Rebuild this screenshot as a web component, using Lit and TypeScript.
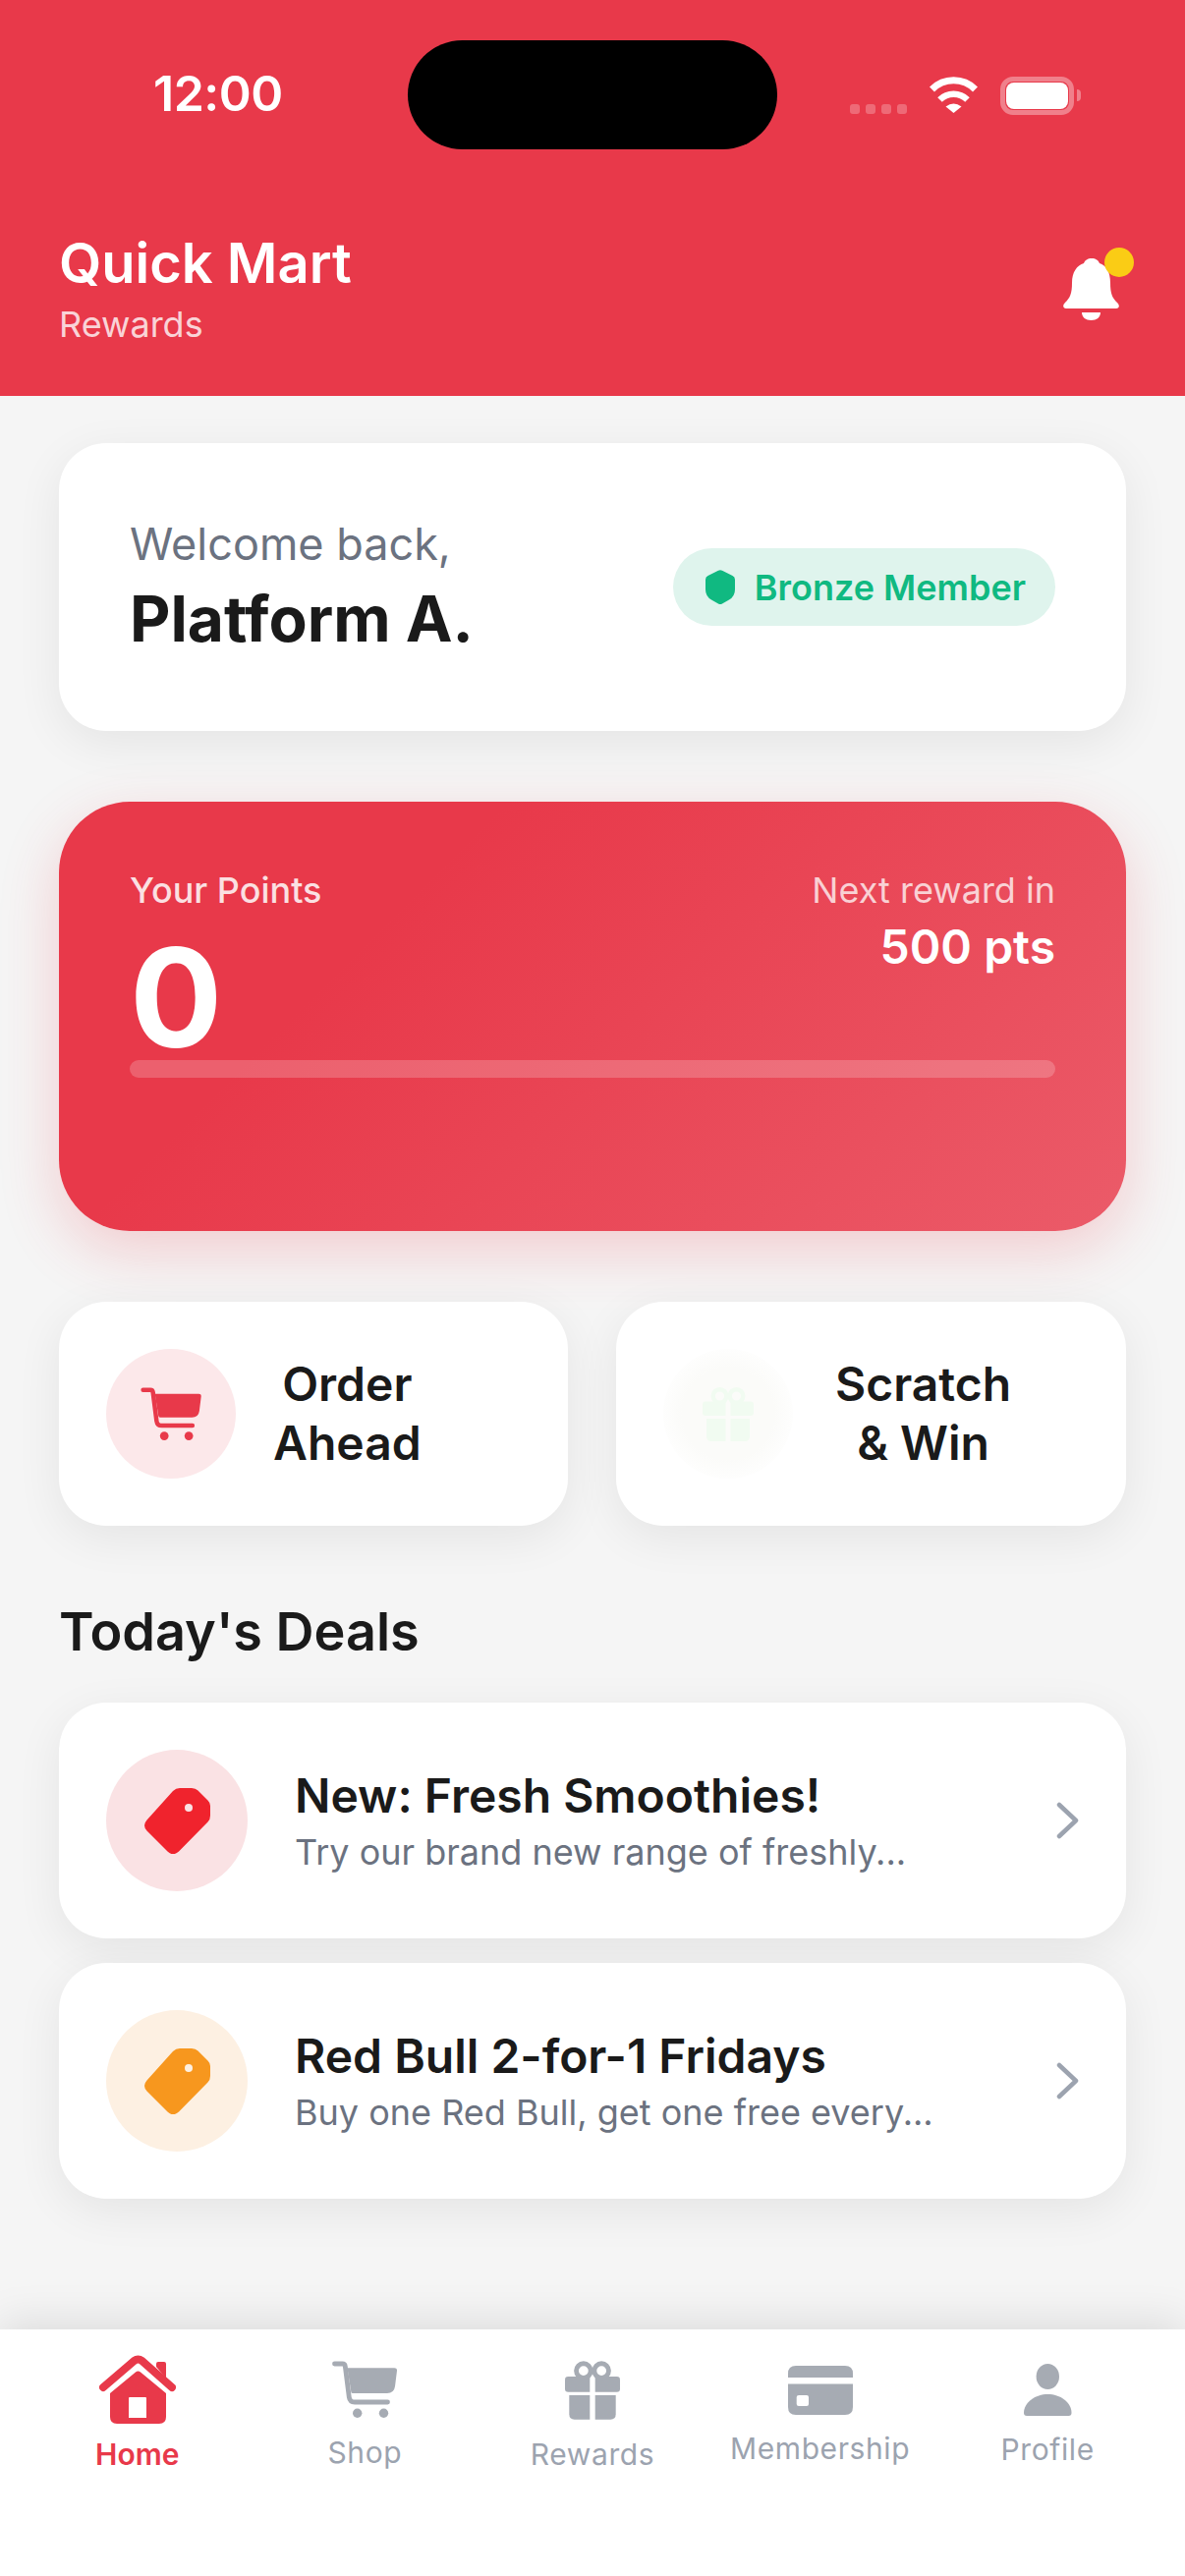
import { LitElement, html, css, svg } from "lit";
import { customElement } from "lit/decorators.js";

const cart = (c: string, w: number, h: number) => html`<svg width=${w} height=${h} viewBox="0 0 66 58" fill=${c}>
  <path d="M2.5 3H10.500Q13 3 13.300 5.500L17.300 37Q18 42 23 42H56.500" fill="none" stroke=${c} stroke-width="4.800" stroke-linecap="round" stroke-linejoin="round"/>
  <path d="M15.500 7.300H63.500Q66.300 7.300 66 10L64 26Q63 33 56 33H21Q19.500 33 19.300 31.500Z"/>
  <circle cx="25.700" cy="53.300" r="4.700"/><circle cx="52.500" cy="53.300" r="4.700"/></svg>`;

const gift = (c: string, w: number, h: number) => html`<svg width=${w} height=${h} viewBox="0 0 52 56" fill=${c}>
  <circle cx="17.500" cy="10" r="6.800" fill="none" stroke=${c} stroke-width="4.500"/>
  <circle cx="34.500" cy="10" r="6.800" fill="none" stroke=${c} stroke-width="4.500"/>
  <path d="M3 15.500H23.500V30H3Q0 30 0 27V18.500Q0 15.500 3 15.500Z"/>
  <path d="M28.500 15.500H49Q52 15.500 52 18.500V27Q52 30 49 30H28.500Z"/>
  <path d="M4 33H23.500V56H9Q4 56 4 51Z"/>
  <path d="M28.500 33H48V51Q48 56 43 56H28.500Z"/></svg>`;

const tag = (c: string, hole: string) => html`<svg width="67" height="67" viewBox="0 0 67 67">
  <path fill=${c} d="M36 0H48Q52 0 54.500 2.500L64.500 12.500Q67 15 67 18V28Q67 32 64.500 34.500L35 64.500Q29 70 23.500 64.500L2.500 43.500Q-2.500 38 2.500 32.500L29 3Q32 0 36 0Z"/>
  <circle cx="45" cy="20" r="4" fill=${hole}/></svg>`;

const chevron = html`<svg class="chev" width="26" height="38" viewBox="0 0 26 38" fill="none" stroke="#9ca3af" stroke-width="4.500" stroke-linecap="round" stroke-linejoin="round"><path d="M4 3L21 19L4 35"/></svg>`;

const wifi = svg`<path d="M3.500 13A31 31 0 0 1 47.500 13" fill="none" stroke="#fff" stroke-width="7"/>
  <path d="M11.500 23.500A20 20 0 0 1 39.500 23.500" fill="none" stroke="#fff" stroke-width="6.500"/>
  <path d="M17.500 30.500Q25.500 24.500 33.500 30.500L25.500 37Z" fill="#fff"/>`;

@customElement("app-root")
export class AppRoot extends LitElement {
  static styles = css`
    :host { display: flex; flex-direction: column; width: 1206px; height: 2622px; overflow: hidden; background: #f5f5f5; font-family: Inter, "Liberation Sans", sans-serif; color: #1a1a1a; }
    .head { background: #e8394a; height: 403px; padding-top: 41px; box-sizing: border-box; color: #fff; flex: none; }
    .status { display: flex; height: 111px; }
    .time { width: 259px; margin-left: 156px; font-size: 50px; font-weight: 600; line-height: 111px; margin-top: -1px; letter-spacing: -0.5px; }
    .island { width: 376px; height: 111px; border-radius: 56px; background: #000; flex: none; }
    .sicons { display: flex; align-items: flex-start; margin-left: 74px; padding-top: 37px; }
    .dots { display: flex; gap: 6px; margin-top: 28px; margin-right: 22px; }
    .dots i { width: 10px; height: 10px; border-radius: 3px; background: rgba(255,255,255,.25); }
    .batt { margin-left: 22px; width: 75px; height: 39px; box-sizing: border-box; border: 5px solid rgba(255,255,255,.36); border-radius: 13px; padding: 1px; }
    .batt b { display: block; height: 100%; background: #fff; border-radius: 8px; }
    .nub { width: 4px; height: 12px; margin: 13px 0 0 3px; background: rgba(255,255,255,.36); border-radius: 0 6px 6px 0; }
    .hrow { display: flex; justify-content: space-between; padding: 82px 0 0 60px; }
    .brand { font-size: 56px; font-weight: 600; line-height: 68px; }
    .sub { font-size: 36px; line-height: 44px; color: rgba(255,255,255,.8); margin-top: 6px; }
    .bell { position: relative; margin: 29px 67px 0 0; width: 57px; height: 63px; }
    .bell i { position: absolute; left: 42px; top: -11px; width: 30px; height: 30px; border-radius: 50%; background: #facc15; }
    main { flex: 1; padding: 48px 60px 0; display: flex; flex-direction: column; min-height: 0; }
    .card { background: #fff; border-radius: 48px; box-shadow: 0 12px 48px rgba(0,0,0,.07); }
    .welcome { height: 293px; box-sizing: border-box; padding: 0 72px; display: flex; align-items: center; justify-content: space-between; }
    .hello { font-size: 45px; color: #6b7280; line-height: 56px; }
    .name { font-size: 64px; font-weight: 700; line-height: 80px; margin-top: 8px; }
    .badge { display: flex; align-items: center; gap: 20px; height: 79px; padding: 0 30px 0 33px; border-radius: 40px; background: #dff4ed; color: #10b981; font-size: 36px; font-weight: 600; }
    .points { margin-top: 72px; height: 437px; box-sizing: border-box; border-radius: 72px; padding: 68px 72px 0; color: #fff; background: linear-gradient(135deg, #e8394a 30%, #eb5b69 100%); box-shadow: 0 20px 60px rgba(232,57,74,.22); }
    .prow { display: flex; justify-content: space-between; }
    .plabel { font-size: 36px; font-weight: 500; line-height: 44px; color: rgba(255,255,255,.85); }
    .nlabel { font-size: 36px; line-height: 44px; text-align: right; color: rgba(255,255,255,.75); }
    .npts { font-size: 48px; font-weight: 600; line-height: 60px; text-align: right; margin-top: 6px; }
    .zero { font-size: 140px; font-weight: 700; line-height: 150px; margin-top: 12px; }
    .bar { height: 18px; border-radius: 9px; background: rgba(255,255,255,.2); margin-top: -11px; }
    .actions { display: grid; grid-template-columns: 518px 519px; gap: 49px; margin-top: 72px; }
    .action { height: 228px; display: flex; align-items: center; padding-left: 48px; font-size: 48px; font-weight: 600; line-height: 60px; text-align: center; }
    .circle { flex: none; border-radius: 50%; display: flex; align-items: center; justify-content: center; }
    .a1 { width: 132px; height: 132px; background: #fce8ea; margin-right: 38px; }
    .a2 { width: 132px; height: 132px; background: radial-gradient(circle, #fbfbf9 50%, #ffffff 80%); margin-right: 43px; }
    h2 { margin: 0; font-size: 54px; font-weight: 600; line-height: 66px; padding-top: 75px; }
    .deal { height: 240px; display: flex; align-items: center; padding: 0 48px; margin-top: 25px; }
    .deal:first-of-type { margin-top: 39px; }
    .c3 { width: 144px; height: 144px; background: #fae2e4; margin-right: 48px; }
    .c4 { width: 144px; height: 144px; background: #fdf0e2; margin-right: 48px; }
    .dt { flex: 1; }
    .dtitle { font-size: 48px; font-weight: 600; line-height: 58px; }
    .dsub { font-size: 36px; color: #6b7280; line-height: 44px; margin-top: 6px; }
    .chev { margin-right: -2px; }
    nav { flex: none; height: 251px; background: #fff; box-shadow: 0 -8px 40px rgba(0,0,0,.1); padding: 0 24px; display: grid; grid-template-columns: repeat(5, 1fr); position: relative; }
    .tab { display: flex; flex-direction: column; align-items: center; font-size: 30px; line-height: 36px; color: #9ca3af; letter-spacing: .6px; }
    .tab svg { display: block; }
    .home { padding-top: 26px; color: #e8394a; font-weight: 600; letter-spacing: 0; }
    .home span { margin-top: 13px; }
    .shop { padding-top: 32px; }
    .shop span { margin-top: 17px; }
    .rew { padding-top: 31px; }
    .rew span { margin-top: 17px; }
    .mem { padding-top: 37px; }
    .mem span { margin-top: 16px; }
    .pro { padding-top: 35px; }
    .pro span { margin-top: 16px; }
  `;

  render() {
    return html`
      <div class="head">
        <div class="status">
          <div class="time">12:00</div>
          <div class="island"></div>
          <div class="sicons">
            <div class="dots"><i></i><i></i><i></i><i></i></div>
            <svg width="51" height="37" viewBox="0 0 51 37">${wifi}</svg>
            <div class="batt"><b></b></div><div class="nub"></div>
          </div>
        </div>
        <div class="hrow">
          <div><div class="brand">Quick Mart</div><div class="sub">Rewards</div></div>
          <div class="bell">
            <svg width="57" height="63" viewBox="0 0 57 63" fill="#fff">
              <path d="M29 0C33 0 36 2 37 5C44 7 48 14 48 25C48 36 50 40 55 45C58 48 57 51 54 51H3C0 51 -1 48 2 45C7 40 9 36 9 25C9 14 14 7 21 5C22 2 25 0 29 0Z"/>
              <path d="M19 55H38C38 60 34 63 28.500 63C23 63 19 60 19 55Z"/>
            </svg><i></i>
          </div>
        </div>
      </div>
      <main>
        <section class="card welcome">
          <div><div class="hello">Welcome back,</div><div class="name">Platform A.</div></div>
          <div class="badge">
            <svg width="30" height="35" viewBox="0 0 30 35" fill="#10b981"><path d="M13 .8Q15 -.3 17 .8L27.500 6Q30 7.200 30 10V20Q30 27 24 30.500L17 34.500Q15 35.500 13 34.500L6 30.500Q0 27 0 20V10Q0 7.200 2.500 6Z"/></svg>
            Bronze Member
          </div>
        </section>
        <section class="points">
          <div class="prow">
            <div><div class="plabel">Your Points</div><div class="zero">0</div></div>
            <div><div class="nlabel">Next reward in</div><div class="npts">500 pts</div></div>
          </div>
          <div class="bar"></div>
        </section>
        <section class="actions">
          <div class="card action"><div class="circle a1">${cart("#e8394a", 62, 54)}</div><div>Order<br />Ahead</div></div>
          <div class="card action"><div class="circle a2">${gift("#f1fbf1", 52, 56)}</div><div>Scratch<br />&amp; Win</div></div>
        </section>
        <h2>Today's Deals</h2>
        <div class="card deal">
          <div class="circle c3">${tag("#f0232d", "#fae2e4")}</div>
          <div class="dt"><div class="dtitle">New: Fresh Smoothies!</div><div class="dsub">Try our brand new range of freshly...</div></div>
          ${chevron}
        </div>
        <div class="card deal">
          <div class="circle c4">${tag("#f7971e", "#fdf0e2")}</div>
          <div class="dt"><div class="dtitle">Red Bull 2-for-1 Fridays</div><div class="dsub">Buy one Red Bull, get one free every...</div></div>
          ${chevron}
        </div>
      </main>
      <nav>
        <div class="tab home">
          <svg width="78" height="70" viewBox="0 0 78 70" fill="#e8394a">
            <path d="M4 33L35.500 6Q39.500 3 43.500 6L74 33" fill="none" stroke="#e8394a" stroke-width="8" stroke-linecap="round" stroke-linejoin="round"/>
            <path d="M58 12V9Q58 7 60 7H66Q68 7 68 9V24Z"/>
            <path fill-rule="evenodd" d="M37 17.500Q39.500 15.500 42 17.500L68 39V63Q68 70 61 70H18Q11 70 11 63V39ZM31 43Q30 43 30 44V64H48V44Q48 43 47 43Z"/>
          </svg>
          <span>Home</span>
        </div>
        <div class="tab shop">${cart("#a6abb3", 66, 58)}<span>Shop</span></div>
        <div class="tab rew">${gift("#a6abb3", 56, 61)}<span>Rewards</span></div>
        <div class="tab mem">
          <svg width="66" height="50" viewBox="0 0 66 50" fill="#a6abb3">
            <path d="M0 12V8Q0 0 8 0H58Q66 0 66 8V12Z"/>
            <path fill-rule="evenodd" d="M0 18.500H66V42Q66 50 58 50H8Q0 50 0 42ZM11 30Q8.700 30 8.700 32V39Q8.700 41 11 41H19Q21 41 21 39V32Q21 30 19 30Z"/>
          </svg>
          <span>Membership</span>
        </div>
        <div class="tab pro">
          <svg width="49" height="53" viewBox="0 0 49 53" fill="#a6abb3">
            <ellipse cx="24.300" cy="13" rx="11.700" ry="13"/>
            <path d="M0 50C0 39 12 31 24.300 31C37 31 48.500 39 48.500 50Q48.500 53 45.500 53H3Q0 53 0 50Z"/>
          </svg>
          <span>Profile</span>
        </div>
      </nav>
    `;
  }
}
